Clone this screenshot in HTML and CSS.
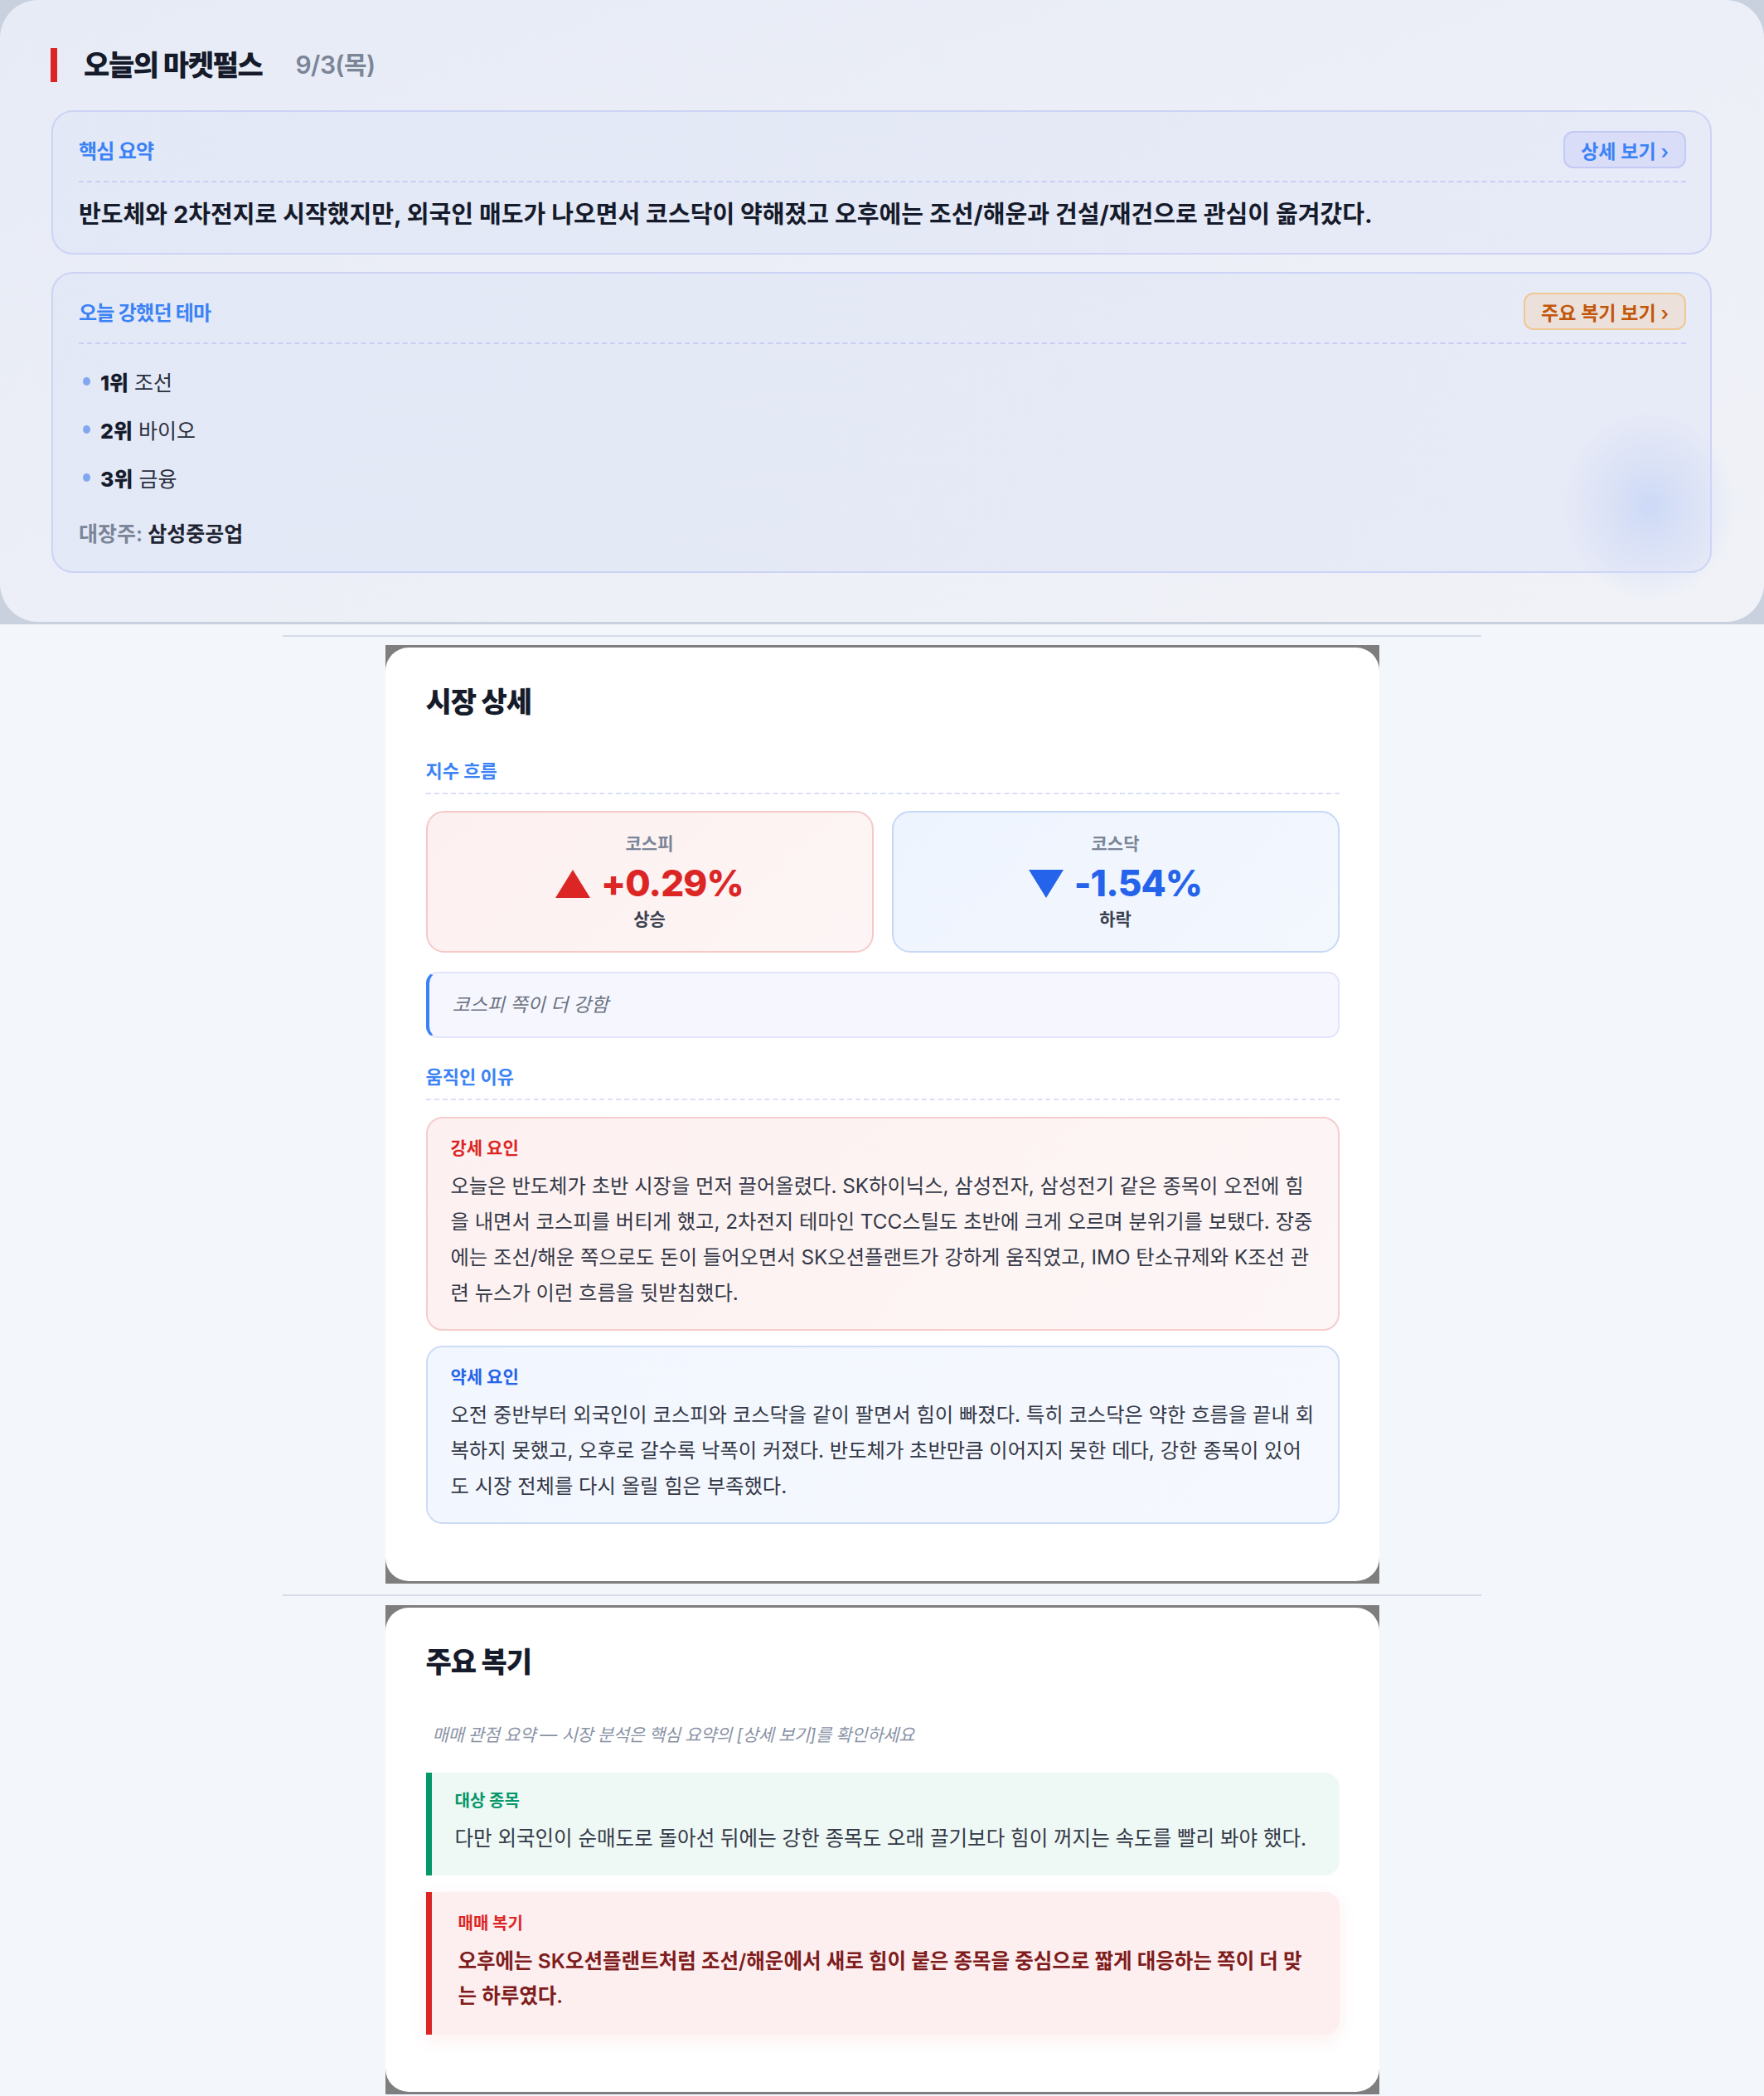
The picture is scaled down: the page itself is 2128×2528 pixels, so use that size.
FILE: index.html
```html
<!DOCTYPE html>
<html lang="ko">
<head>
<meta charset="utf-8">
<title>오늘의 마켓펄스</title>
<link rel="stylesheet" href="styles.css">
</head>
<body>
<div class="hero-wrap">
  <section class="hero">
    <div class="glow"></div>
    <h1 class="hero-title"><span class="hero-name">오늘의 마켓펄스</span><span class="hero-date">9/3(목)</span></h1>

    <div class="panel">
      <div class="panel-head">
        <span class="panel-label">핵심 요약</span>
        <span class="chip chip-blue">상세 보기 ›</span>
      </div>
      <p class="summary">반도체와 2차전지로 시작했지만, 외국인 매도가 나오면서 코스닥이 약해졌고 오후에는 조선/해운과 건설/재건으로 관심이 옮겨갔다.</p>
    </div>

    <div class="panel panel-theme">
      <div class="panel-head">
        <span class="panel-label">오늘 강했던 테마</span>
        <span class="chip chip-orange">주요 복기 보기 ›</span>
      </div>
      <ul class="rank-list">
        <li><b>1위</b> 조선</li>
        <li><b>2위</b> 바이오</li>
        <li><b>3위</b> 금융</li>
      </ul>
      <p class="leader"><span class="leader-key">대장주:</span> 삼성중공업</p>
    </div>
  </section>
</div>

<div class="page">
  <hr class="sep">
  <div class="frame">
    <article class="card">
      <h2 class="card-title">시장 상세</h2>

      <h3 class="sub-label">지수 흐름</h3>
      <div class="index-grid">
        <div class="index-box up">
          <div class="index-name">코스피</div>
          <div class="index-val"><svg class="tri" viewBox="0 0 42 34" width="42" height="34"><polygon points="21,0 42,34 0,34" fill="#dc2626"/></svg><span>+0.29%</span></div>
          <div class="index-state">상승</div>
        </div>
        <div class="index-box down">
          <div class="index-name">코스닥</div>
          <div class="index-val"><svg class="tri" viewBox="0 0 42 34" width="42" height="34"><polygon points="0,0 42,0 21,34" fill="#2563eb"/></svg><span>-1.54%</span></div>
          <div class="index-state">하락</div>
        </div>
      </div>
      <div class="note">코스피 쪽이 더 강함</div>

      <h3 class="sub-label reason-label">움직인 이유</h3>
      <div class="factor strong">
        <div class="factor-title">강세 요인</div>
        <p class="factor-text">오늘은 반도체가 초반 시장을 먼저 끌어올렸다. SK하이닉스, 삼성전자, 삼성전기 같은 종목이 오전에 힘을 내면서 코스피를 버티게 했고, 2차전지 테마인 TCC스틸도 초반에 크게 오르며 분위기를 보탰다. 장중에는 조선/해운 쪽으로도 돈이 들어오면서 SK오션플랜트가 강하게 움직였고, IMO 탄소규제와 K조선 관련 뉴스가 이런 흐름을 뒷받침했다.</p>
      </div>
      <div class="factor weak">
        <div class="factor-title">약세 요인</div>
        <p class="factor-text">오전 중반부터 외국인이 코스피와 코스닥을 같이 팔면서 힘이 빠졌다. 특히 코스닥은 약한 흐름을 끝내 회복하지 못했고, 오후로 갈수록 낙폭이 커졌다. 반도체가 초반만큼 이어지지 못한 데다, 강한 종목이 있어도 시장 전체를 다시 올릴 힘은 부족했다.</p>
      </div>
    </article>
  </div>

  <hr class="sep sep2">
  <div class="frame">
    <article class="card">
      <h2 class="card-title">주요 복기</h2>
      <p class="review-hint">매매 관점 요약 — 시장 분석은 핵심 요약의 [상세 보기]를 확인하세요</p>
      <div class="review green">
        <div class="review-title">대상 종목</div>
        <p class="review-text">다만 외국인이 순매도로 돌아선 뒤에는 강한 종목도 오래 끌기보다 힘이 꺼지는 속도를 빨리 봐야 했다.</p>
      </div>
      <div class="review red">
        <div class="review-title">매매 복기</div>
        <p class="review-text">오후에는 SK오션플랜트처럼 조선/해운에서 새로 힘이 붙은 종목을 중심으로 짧게 대응하는 쪽이 더 맞는 하루였다.</p>
      </div>
    </article>
  </div>
</div>
</body>
</html>
```

FILE: styles.css
```css
* { box-sizing: border-box; }
html, body { margin: 0; padding: 0; }
body {
  background: #f3f6fa;
  font-family: "Inter", "Noto Sans CJK KR", sans-serif;
  color: #1a1f2e;
  width: 2128px;
  min-height: 2528px;
  overflow: hidden;
}
p, h1, h2, h3, ul { margin: 0; padding: 0; }

/* ---------- hero ---------- */
.hero-wrap {
  background: #c9d1df;
  padding-bottom: 3px;
}
.hero {
  position: relative;
  overflow: hidden;
  height: 750px;
  border-radius: 46px;
  padding: 58px 63px 0 62px;
  background: linear-gradient(160deg, #e7ebf6 0%, #eceff7 50%, #f0f2f7 100%);
}
.glow {
  position: absolute;
  left: 1885px;
  top: 495px;
  width: 210px;
  height: 230px;
  border-radius: 50%;
  background: radial-gradient(closest-side, rgba(203, 216, 246, 0.95) 0%, rgba(211, 221, 246, 0.65) 45%, rgba(225, 231, 247, 0) 100%);
  pointer-events: none;
  z-index: 1;
}
.hero-title {
  display: flex;
  align-items: center;
  height: 41px;
  border-left: 8px solid #dc2626;
  padding-left: 32px;
  margin-left: -1px;
  font-size: 34px;
  font-weight: 800;
  letter-spacing: -0.04em;
  line-height: 41px;
}
.hero-name { color: #161b2b; }
.hero-date {
  margin-left: 40px;
  font-size: 30px;
  font-weight: 600;
  color: #7b8598;
  letter-spacing: -0.02em;
}
.panel {
  position: relative;
  margin-top: 34px;
  border: 2px solid #cdd3f5;
  border-radius: 26px;
  padding: 23px 29px 26px 31px;
  background: linear-gradient(100deg, rgba(226, 232, 246, 0.9), rgba(230, 233, 247, 0.85));
}
.panel-theme { margin-top: 21px; padding-bottom: 27px; }
.panel-head {
  position: relative;
  z-index: 2;
  display: flex;
  align-items: center;
  justify-content: space-between;
  height: 45px;
}
.panel-label {
  font-size: 24px;
  font-weight: 700;
  color: #3b82f6;
  letter-spacing: -0.03em;
}
.chip {
  display: inline-flex;
  align-items: center;
  height: 45px;
  padding: 0 19px;
  border-radius: 12px;
  font-size: 23px;
  font-weight: 600;
}
.chip-blue { background: #d9ddf7; border: 2px solid #c4c9f5; color: #3b82f6; }
.chip-orange { background: #ece1da; border: 2px solid #efc893; color: #c2570c; }
.summary, .rank-list, .leader { position: relative; }
.panel-head + * {
  margin-top: 15px;
  border-top: 2px dashed #c9cef5;
}
.summary {
  padding-top: 19px;
  font-size: 29.1px;
  font-weight: 700;
  line-height: 40px;
  color: #161b2b;
}
.rank-list {
  list-style: none;
  padding-top: 27px;
}
.rank-list li {
  display: flex;
  align-items: center;
  height: 36px;
  margin-bottom: 22px;
  font-size: 25px;
  color: #2a2f3d;
  margin-left: 5px;
}
.rank-list li:last-child { margin-bottom: 0; }
.rank-list li::before {
  content: "";
  width: 9px;
  height: 10px;
  border-radius: 50%;
  background: #7fa8f0;
  margin-right: 12px;
}
.rank-list li b { font-weight: 800; color: #161b2b; margin-right: 7px; }
.leader {
  margin-top: 32px;
  height: 36px;
  line-height: 36px;
  font-size: 25px;
  font-weight: 600;
  color: #1f2433;
}
.leader-key { color: #7b8598; }

/* ---------- page ---------- */
.page {
  width: 1446px;
  margin: 0 auto;
  padding-top: 13px;
}
.sep {
  margin: 0;
  border: 0;
  border-top: 2px solid #d5dce8;
  height: 0;
}
.sep2 { margin-top: 13px; }
.frame {
  width: 1199px;
  margin: 10px auto 0;
  background: #7e7e7e;
  padding: 3px 0 3px;
}
.sep2 + .frame { margin-top: 11px; }
.card {
  background: #ffffff;
  border-radius: 28px;
  padding: 44px 48px 69px 49px;
}
.card-title {
  font-size: 34px;
  line-height: 44px;
  font-weight: 800;
  letter-spacing: -0.03em;
  color: #161b2b;
}
.sub-label {
  margin-top: 46px;
  font-size: 22px;
  line-height: 30px;
  font-weight: 700;
  color: #3b82f6;
  padding-bottom: 11px;
  border-bottom: 2px dashed #dcdffa;
}
.reason-label { margin-top: 32px; }
.index-grid {
  display: grid;
  grid-template-columns: 1fr 1fr;
  gap: 22px;
  margin-top: 20px;
}
.index-box {
  border-radius: 22px;
  padding: 24px 0 24px;
  text-align: center;
}
.index-box.up { background: linear-gradient(135deg, #fdf0f0, #fdf5f5); border: 2px solid #f6c8c8; }
.index-box.down { background: linear-gradient(135deg, #eef4fe, #f3f7fe); border: 2px solid #c7d8f6; }
.index-name {
  font-size: 21px;
  line-height: 28px;
  font-weight: 700;
  color: #7b8598;
}
.index-val {
  display: flex;
  justify-content: center;
  align-items: center;
  gap: 13px;
  height: 58px;
  margin-top: 4px;
  font-size: 44px;
  font-weight: 800;
  letter-spacing: -0.02em;
}
.up .index-val { color: #dc2626; }
.down .index-val { color: #2563eb; }
.tri { display: block; margin-top: 2px; }
.index-state {
  margin-top: 1px;
  font-size: 21px;
  line-height: 28px;
  font-weight: 600;
  color: #3b4150;
}
.note {
  margin-top: 23px;
  background: #f5f6fe;
  border: 2px solid #e1e4fa;
  border-left: 4px solid #3b82f6;
  border-radius: 14px;
  padding: 23px 28px 22px;
  font-size: 23px;
  line-height: 31px;
  font-style: italic;
  color: #6b7280;
}
.factor {
  margin-top: 20px;
  border-radius: 20px;
  padding: 22px 28px 22px 28px;
}
.factor + .factor { margin-top: 18px; }
.factor.strong { background: linear-gradient(135deg, #fdf0f0, #fdf6f6); border: 2px solid #f6cccc; }
.factor.weak { background: linear-gradient(135deg, #f2f6fe, #f5f8fe); border: 2px solid #cedcf7; }
.factor-title {
  font-size: 21px;
  line-height: 28px;
  font-weight: 700;
}
.strong .factor-title { color: #dc2626; }
.weak .factor-title { color: #2563eb; }
.factor-text {
  margin-top: 10px;
  font-size: 24.3px;
  line-height: 43px;
  color: #343947;
}
.review-hint {
  margin-top: 51px;
  padding-left: 8px;
  font-size: 21px;
  line-height: 30px;
  font-style: italic;
  color: #8a93a6;
  letter-spacing: -0.02em;
}
.review {
  margin-top: 30px;
  border-radius: 0 18px 18px 0;
  padding: 20px 30px 25px 28px;
}
.review.green { background: #eef8f4; border-left: 7px solid #059669; }
.review.red {
  margin-top: 20px;
  background: #fdeef0;
  border-left: 7px solid #dc2626;
  padding: 24px 30px 26px 32px;
  box-shadow: 0 6px 22px rgba(220, 38, 38, 0.08);
}
.review-title {
  font-size: 20px;
  line-height: 28px;
  font-weight: 700;
}
.green .review-title { color: #059669; }
.red .review-title { color: #dc2626; }
.review-text {
  margin-top: 11px;
  font-size: 24.5px;
  line-height: 40px;
  color: #343947;
}
.red .review-text {
  margin-top: 10px;
  line-height: 42px;
  color: #7f1d1d;
  font-weight: 600;
}
```
